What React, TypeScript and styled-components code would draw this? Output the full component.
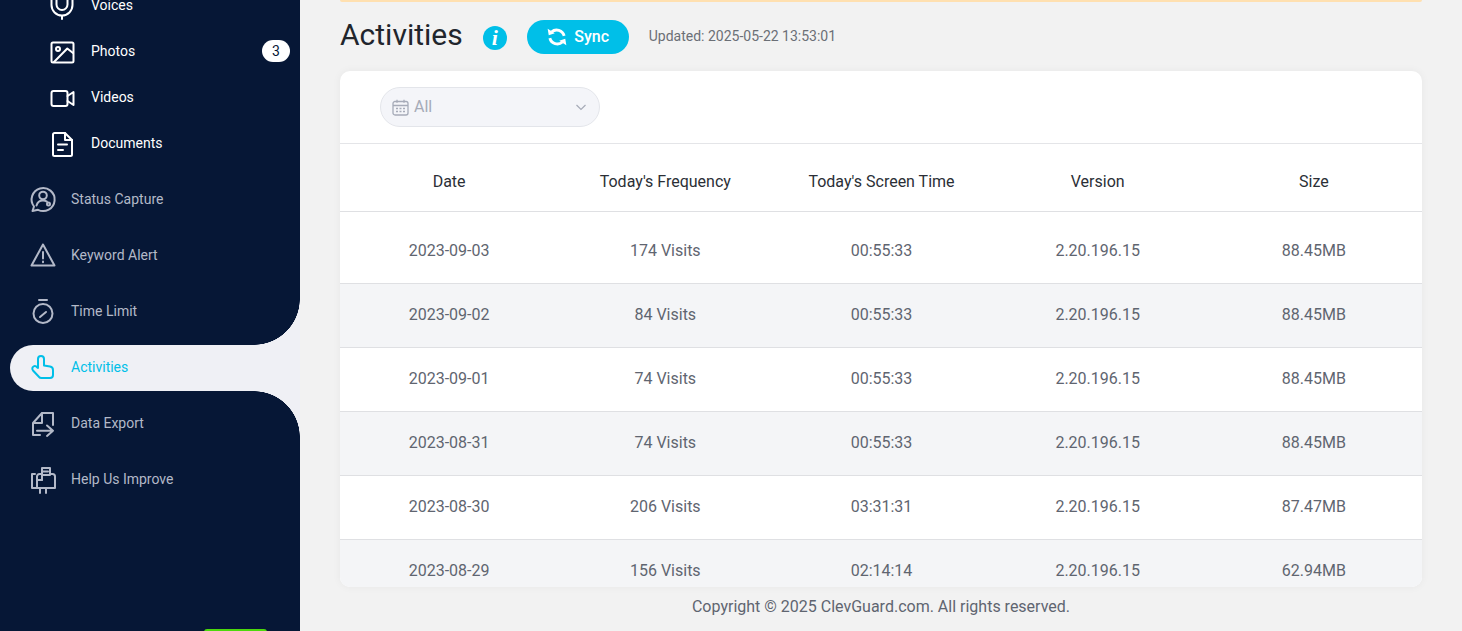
import React from 'react';
import styled, { createGlobalStyle } from 'styled-components';

const GlobalStyle = createGlobalStyle`
  html, body {
    margin: 0;
    height: 100%;
    overflow: hidden;
    background: #f2f2f2;
    font-family: Roboto, "Liberation Sans", sans-serif;
  }
`;

const Page = styled.div`
  display: flex;
  height: 631px;
  overflow: hidden;
`;

const Sidebar = styled.aside`
  position: relative;
  flex: 0 0 300px;
  background: #061736;
  overflow: hidden;
`;

const NavScroll = styled.nav`
  display: flex;
  flex-direction: column;
  margin-top: -18px;
`;

const SubList = styled.div`
  display: flex;
  flex-direction: column;
  margin-bottom: 11px;
`;

const SubItem = styled.div`
  display: flex;
  align-items: center;
  height: 46px;
  padding: 0 10px 0 49px;
  color: #fff;
  font-size: 14px;
`;

const SubIcon = styled.span`
  display: flex;
  justify-content: center;
  width: 26px;
  margin-right: 16px;
`;

const Badge = styled.span`
  margin-left: auto;
  width: 28px;
  height: 22px;
  border-radius: 11px;
  background: #fff;
  color: #061736;
  font-size: 14px;
  line-height: 22px;
  text-align: center;
`;

const NavItem = styled.div<{ $active?: boolean }>`
  position: relative;
  display: flex;
  align-items: center;
  box-sizing: border-box;
  height: 46px;
  margin: 0 0 10px 10px;
  padding: 0 0 2px 20px;
  border-radius: 23px 0 0 23px;
  font-size: 14px;
  background: ${p => (p.$active ? '#eff0f5' : 'transparent')};
  color: ${p => (p.$active ? '#00bfe8' : '#b3b9c8')};

  ${p =>
    p.$active &&
    `
    &::before, &::after {
      content: '';
      position: absolute;
      right: 0;
      width: 46px;
      height: 46px;
    }
    &::before {
      top: -46px;
      background: radial-gradient(circle at 0 0, transparent 45.5px, #eff0f5 46px);
    }
    &::after {
      bottom: -46px;
      background: radial-gradient(circle at 0 100%, transparent 45.5px, #eff0f5 46px);
    }
  `}
`;

const NavIcon = styled.span`
  display: flex;
  justify-content: center;
  width: 26px;
  margin-right: 15px;
`;

const GreenTab = styled.div`
  position: absolute;
  left: 204px;
  bottom: -28px;
  width: 63px;
  height: 30px;
  border-radius: 3px;
  background: #4cd80c;
`;

const Main = styled.main`
  flex: 1;
  min-width: 0;
  display: flex;
  flex-direction: column;
  padding: 0 40px;
`;

const Notice = styled.div`
  flex: 0 0 2px;
  background: #ffe0b0;
  border-radius: 0 0 4px 4px;
`;

const TitleRow = styled.div`
  display: flex;
  align-items: center;
  height: 69px;
  flex: 0 0 69px;
`;

const Title = styled.h1`
  margin: 0 20px 4px 0;
  font-size: 30px;
  font-weight: 400;
  line-height: 66px;
  color: #21252c;
`;

const InfoDot = styled.span`
  display: flex;
  align-items: center;
  justify-content: center;
  width: 24px;
  height: 24px;
  margin-right: 20px;
  margin-top: 2px;
  border-radius: 50%;
  background: #00bfe8;
  color: #fff;
  font-family: "Liberation Serif", serif;
  font-style: italic;
  font-weight: 700;
  font-size: 22px;
`;

const SyncButton = styled.button`
  display: flex;
  align-items: center;
  justify-content: center;
  gap: 6px;
  width: 102px;
  height: 34px;
  margin-right: 20px;
  border: none;
  border-radius: 17px;
  background: #00bfe8;
  color: #fff;
  font-family: inherit;
  font-size: 16px;
  font-weight: 500;
`;

const Updated = styled.span`
  margin-bottom: 2px;
  font-size: 14px;
  color: #6b6f76;
`;

const Card = styled.section`
  flex: 0 0 516px;
  width: 1082px;
  background: #fff;
  border-radius: 10px;
  box-shadow: 0 0 8px rgba(0, 0, 0, 0.05);
  overflow: hidden;
`;

const FilterBar = styled.div`
  display: flex;
  align-items: center;
  height: 72px;
  padding: 0 40px;
  border-bottom: 1px solid #e4e5e8;
`;

const Select = styled.div`
  display: flex;
  align-items: center;
  width: 220px;
  height: 40px;
  box-sizing: border-box;
  padding: 0 12px 0 11px;
  border: 1px solid #e3e5ea;
  border-radius: 20px;
  background: #f4f5f9;
  color: #a6abb8;
  font-size: 16px;
`;

const SelectLabel = styled.span`
  flex: 1;
  margin: 0 0 2px 5px;
`;

const Row = styled.div<{ $striped?: boolean }>`
  display: grid;
  grid-template-columns: repeat(5, 1fr);
  align-items: center;
  box-sizing: border-box;
  height: 64px;
  padding: 0 0 2px 1px;
  border-bottom: 1px solid #dfe0e3;
  background: ${p => (p.$striped ? '#f4f5f7' : '#fff')};
`;

const HeadRow = styled(Row)`
  height: 68px;
  padding: 8px 0 0 1px;
`;

const FirstRow = styled(Row)`
  height: 72px;
  padding: 6px 0 0 1px;
`;

const HeadCell = styled.div`
  text-align: center;
  font-size: 16px;
  color: #2b2f36;
`;

const Cell = styled.div`
  text-align: center;
  font-size: 16px;
  color: #5f6570;
`;

const Footer = styled.footer`
  margin-top: 10px;
  text-align: center;
  font-size: 16px;
  line-height: 20px;
  color: #5f6570;
`;

const GlyphSvg = styled.svg`
  display: block;
  overflow: visible;
`;

const Glyph: React.FC<{ children: React.ReactNode }> = ({ children }) => (
  <GlyphSvg
    width={26}
    height={26}
    viewBox="0 0 26 26"
    fill="none"
    stroke="currentColor"
    strokeWidth={2}
    strokeLinecap="round"
    strokeLinejoin="round"
  >
    {children}
  </GlyphSvg>
);

const subItems = [
  {
    label: 'Voices',
    icon: (
      <>
        <rect x="7.500" y="-10" width="11" height="28" rx="5.500" />
        <path d="M2.500 6v7a10.500 10.500 0 0 0 21 0V6M13 24v3" />
      </>
    ),
  },
  {
    label: 'Photos',
    badge: 3,
    icon: (
      <>
        <rect x="2.500" y="4.500" width="22" height="20" rx="1.500" />
        <circle cx="9" cy="11" r="2" />
        <path d="M5 24 18.300 10.500 24 15" />
      </>
    ),
  },
  {
    label: 'Videos',
    icon: (
      <>
        <rect x="2.500" y="7" width="16" height="15" rx="2" />
        <path d="M18.500 12l6-4v13l-6-4" />
      </>
    ),
  },
  {
    label: 'Documents',
    icon: (
      <>
        <path d="M4 4.500A1.500 1.500 0 0 1 5.500 3H16l7 7v14.500a1.500 1.500 0 0 1-1.500 1.500h-16A1.500 1.500 0 0 1 4 24.500z" />
        <path d="M16 3v7h7M9 14.500h9M9 20h5" />
      </>
    ),
  },
];

const navItems = [
  {
    label: 'Status Capture',
    icon: (
      <>
        <path d="M2.500 25 4 20.500A11.500 11.500 0 1 1 8 23.800z" />
        <circle cx="13" cy="9.500" r="3.800" />
        <path d="M6.500 19.500c.8-3.200 3.400-5 6.500-5 1.500 0 2.800.4 3.900 1.100" />
        <circle cx="18.500" cy="18" r="1.500" />
      </>
    ),
  },
  {
    label: 'Keyword Alert',
    icon: (
      <>
        <path d="M13 2.500 1.500 23.500h23z" />
        <path d="M13 10v6.500M13 19.500v.8" />
      </>
    ),
  },
  {
    label: 'Time Limit',
    icon: (
      <>
        <circle cx="13" cy="15.500" r="9.500" />
        <path d="M9 2h8M10 19l6-5" />
      </>
    ),
  },
  {
    label: 'Activities',
    active: true,
    icon: (
      <path d="M8 14V5a3 3 0 0 1 6 0v6.500l6 1a3.500 3.500 0 0 1 3 3.500v5a3 3 0 0 1-3 3h-8.500c-1 0-2-.4-2.600-1.200L3 16.500c-1.200-1.500-.8-3.200.5-4 1.300-.8 2.800-.2 3.800 1z" />
    ),
  },
  {
    label: 'Data Export',
    icon: (
      <>
        <path d="M12 3h11v12M12 3 3 13v12h7M12 3v10H3" />
        <path d="M7 20.700h16M17 15.500l6 5.200-6 5.200" />
      </>
    ),
  },
  {
    label: 'Help Us Improve',
    icon: (
      <>
        <path d="M5 8H2v14h3M12 14V2h8v7h-8M12 5.500h6" />
        <path d="M7 14h5M7 22V10.500A2.500 2.500 0 0 1 9.500 8H12M20 8h2.500A2.500 2.500 0 0 1 25 10.500V22H5" />
        <path d="M10 22v5M16 22v5" />
      </>
    ),
  },
];

const rows = [
  ['2023-09-03', '174 Visits', '00:55:33', '2.20.196.15', '88.45MB'],
  ['2023-09-02', '84 Visits', '00:55:33', '2.20.196.15', '88.45MB'],
  ['2023-09-01', '74 Visits', '00:55:33', '2.20.196.15', '88.45MB'],
  ['2023-08-31', '74 Visits', '00:55:33', '2.20.196.15', '88.45MB'],
  ['2023-08-30', '206 Visits', '03:31:31', '2.20.196.15', '87.47MB'],
  ['2023-08-29', '156 Visits', '02:14:14', '2.20.196.15', '62.94MB'],
];

const headers = ['Date', "Today's Frequency", "Today's Screen Time", 'Version', 'Size'];

export default function App() {
  return (
    <Page>
      <GlobalStyle />
      <Sidebar>
        <NavScroll>
          <SubList>
            {subItems.map(item => (
              <SubItem key={item.label}>
                <SubIcon>
                  <Glyph>{item.icon}</Glyph>
                </SubIcon>
                {item.label}
                {item.badge && <Badge>{item.badge}</Badge>}
              </SubItem>
            ))}
          </SubList>
          {navItems.map(item => (
            <NavItem key={item.label} $active={item.active}>
              <NavIcon>
                <Glyph>{item.icon}</Glyph>
              </NavIcon>
              {item.label}
            </NavItem>
          ))}
        </NavScroll>
        <GreenTab />
      </Sidebar>
      <Main>
        <Notice />
        <TitleRow>
          <Title>Activities</Title>
          <InfoDot>i</InfoDot>
          <SyncButton>
            <svg width="22" height="22" viewBox="0 0 20 20" fill="none" stroke="currentColor" strokeWidth="2.600">
              <path d="M5 5.500A7 7 0 0 1 16.500 9" />
              <path d="M3.500 11A7 7 0 0 0 15 14.500" />
              <path d="M1.500 2.500 8 6.500 2.500 8.500zM18.500 17.500 12 13.500l5.500-2z" fill="currentColor" strokeWidth="0" />
            </svg>
            Sync
          </SyncButton>
          <Updated>Updated: 2025-05-22 13:53:01</Updated>
        </TitleRow>
        <Card>
          <FilterBar>
            <Select>
              <svg width="17" height="17" viewBox="0 0 17 17" fill="none" stroke="currentColor" strokeWidth="1.300">
                <rect x="1" y="2.500" width="15" height="13.500" rx="2" />
                <path d="M1 6.500h15M5 .8v3M12 .8v3" />
                <path d="M4 9.500h2M7.500 9.500h2M11 9.500h2M4 12.500h2M7.500 12.500h2M11 12.500h2" strokeWidth="1.500" />
              </svg>
              <SelectLabel>All</SelectLabel>
              <svg width="12" height="12" viewBox="0 0 12 12" fill="none" stroke="currentColor" strokeWidth="1.200">
                <path d="m1.500 4 4.500 4.500L10.500 4" />
              </svg>
            </Select>
          </FilterBar>
          <HeadRow>
            {headers.map(h => (
              <HeadCell key={h}>{h}</HeadCell>
            ))}
          </HeadRow>
          {rows.map((row, i) => {
            const RowKind = i === 0 ? FirstRow : Row;
            return (
              <RowKind key={row[0]} $striped={i % 2 === 1}>
                {row.map((value, j) => (
                  <Cell key={j}>{value}</Cell>
                ))}
              </RowKind>
            );
          })}
        </Card>
        <Footer>Copyright © 2025 ClevGuard.com. All rights reserved.</Footer>
      </Main>
    </Page>
  );
}
